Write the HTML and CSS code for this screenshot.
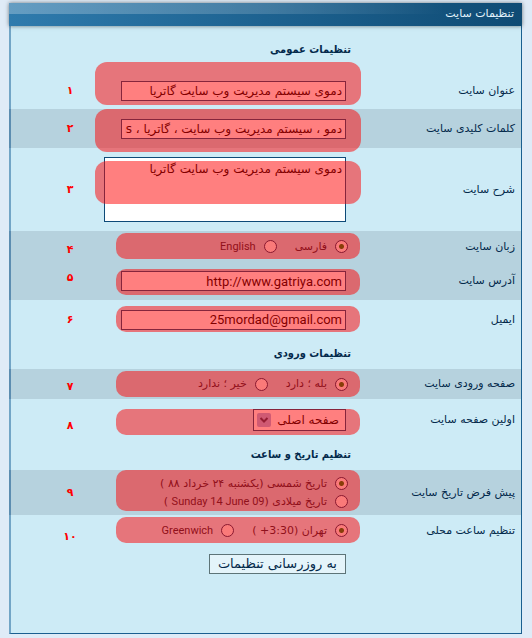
FILE: index.html
```html
<!DOCTYPE html>
<html lang="fa" dir="rtl">
<head>
<meta charset="utf-8">
<meta name="viewport" content="width=device-width, initial-scale=1">
<title>تنظیمات سایت</title>
<link rel="stylesheet" href="styles.css">
</head>
<body>
<form class="panel">
  <h1 class="panel-title">تنظیمات سایت</h1>

  <h2 class="section section-first">تنظیمات عمومی</h2>
  <div class="row row-title">
    <label class="name" for="title">عنوان سایت</label>
    <div class="field"><input class="text" id="title" type="text" value="دموی سیستم مدیریت وب سایت گاتریا"><span class="mark mark-wide"></span></div>
    <span class="num">۱</span>
  </div>
  <div class="row row-keywords shaded">
    <label class="name" for="keywords">کلمات کلیدی سایت</label>
    <div class="field"><input class="text" id="keywords" type="text" value="دمو ، سیستم مدیریت وب سایت ، گاتریا ، cms"><span class="mark mark-wide"></span></div>
    <span class="num">۲</span>
  </div>
  <div class="row row-about">
    <label class="name" for="about">شرح سایت</label>
    <div class="field"><textarea class="text area" id="about">دموی سیستم مدیریت وب سایت گاتریا</textarea><span class="mark mark-wide"></span></div>
    <span class="num">۳</span>
  </div>
  <div class="row row-language shaded">
    <span class="name" id="lang-name">زبان سایت</span>
    <div class="field choices" role="radiogroup" aria-labelledby="lang-name">
      <label class="choice"><input type="radio" name="lang" checked>فارسی</label>
      <label class="choice latin"><input type="radio" name="lang">English</label>
      <span class="mark"></span>
    </div>
    <span class="num num-low">۴</span>
  </div>
  <div class="row row-address shaded">
    <label class="name" for="address">آدرس سایت</label>
    <div class="field"><input class="text latin" id="address" type="text" dir="ltr" value="http://www.gatriya.com"><span class="mark"></span></div>
    <span class="num num-high">۵</span>
  </div>
  <div class="row row-email">
    <label class="name" for="email">ایمیل</label>
    <div class="field"><input class="text latin" id="email" type="email" dir="ltr" value="25mordad@gmail.com"><span class="mark"></span></div>
    <span class="num">۶</span>
  </div>

  <h2 class="section">تنظیمات ورودی</h2>
  <div class="row row-splash shaded">
    <span class="name" id="splash-name">صفحه ورودی سایت</span>
    <div class="field choices" role="radiogroup" aria-labelledby="splash-name">
      <label class="choice"><input type="radio" name="splash" checked>بله ؛ دارد</label>
      <label class="choice"><input type="radio" name="splash">خیر ؛ ندارد</label>
      <span class="mark"></span>
    </div>
    <span class="num num-low">۷</span>
  </div>
  <div class="row row-first-page">
    <label class="name" for="first-page">اولین صفحه سایت</label>
    <div class="field">
      <div class="picker">
        <select id="first-page"><option>صفحه اصلی</option></select>
        <svg class="arrow" viewBox="0 0 14 14" aria-hidden="true"><rect width="14" height="14" rx="2"/><path d="M3.500 5 7 8.500 10.500 5"/></svg>
      </div>
      <span class="mark"></span>
    </div>
    <span class="num num-lower">۸</span>
  </div>

  <h2 class="section">تنظیم تاریخ و ساعت</h2>
  <div class="row row-date shaded">
    <span class="name" id="date-name">پیش فرض تاریخ سایت</span>
    <div class="field choices stacked" role="radiogroup" aria-labelledby="date-name">
      <label class="choice"><input type="radio" name="date" checked>تاریخ شمسی (یکشنبه ۲۴ خرداد ۸۸ )</label>
      <label class="choice"><input type="radio" name="date"><span>تاریخ میلادی (<span class="latin">Sunday 14 June 09</span> )</span></label>
      <span class="mark mark-tall"></span>
    </div>
    <span class="num">۹</span>
  </div>
  <div class="row row-time">
    <span class="name" id="time-name">تنظیم ساعت محلی</span>
    <div class="field choices" role="radiogroup" aria-labelledby="time-name">
      <label class="choice"><input type="radio" name="time" checked>تهران (3:30+ )</label>
      <label class="choice latin"><input type="radio" name="time">Greenwich</label>
      <span class="mark"></span>
    </div>
    <span class="num num-lower">۱۰</span>
  </div>

  <div class="actions"><button class="submit" type="submit">به روزرسانی تنظیمات</button></div>
</form>
</body>
</html>
```

FILE: styles.css
```css
* { box-sizing: border-box; }

body {
  margin: 0;
  padding: 3px 10px 4px 9px;
  background: #dfebf7;
  color: #03294b;
  font-family: "DejaVu Sans", sans-serif;
  font-size: 11px;
  line-height: 16px;
}

.panel {
  background: #cdebf6;
  border-right: 1px solid #1b5f90;
  border-bottom: 1px solid #1b5f90;
  border-left: 2px solid #72a5c6;
  padding-bottom: 59px;
}

.panel-title {
  margin: 0 -1px 0 -2px;
  padding: 3px 8px 4px;
  background:
    linear-gradient(to right, rgba(255, 255, 255, .26), rgba(255, 255, 255, .16) 50%, rgba(255, 255, 255, 0) 85%) left top / 100% 11px no-repeat,
    linear-gradient(to right, #2f7bad, #1d6290 50%, #0f4b74);
  box-shadow: 0 0 4px rgba(0, 0, 0, .5);
  color: #e2f3fc;
  font-size: 11px;
  font-weight: normal;
}

.section {
  margin: 0;
  padding: 7px 170px 7px 0;
  font-family: "DejaVu Sans Condensed", "DejaVu Sans", sans-serif;
  font-size: 11px;
  font-weight: bold;
}

.section-first { padding: 16px 170px 14px 0; }

.row {
  display: grid;
  grid-template-columns: 160px minmax(0, 1fr) 84px;
  align-items: center;
}

.shaded {
  background: #b6d2de;
  margin-left: -2px;
  border-left: 2px solid #5c8db0;
}

.name { padding-right: 6px; }

.field {
  position: relative;
  align-self: stretch;
  display: flex;
  align-items: center;
  padding: 0 15px 0 26px;
}

.num {
  padding-left: 34px;
  color: #f00;
  font-weight: bold;
  text-align: center;
}

.num-high { padding-bottom: 6px; }
.num-low { padding-top: 6px; }
.num-lower { padding-top: 12px; }

.row-title { min-height: 37px; }
.row-keywords { min-height: 39px; }
.row-about { min-height: 83px; }
.row-language { min-height: 31px; }
.row-address { min-height: 38px; }
.row-email { min-height: 39px; }
.row-splash { min-height: 30px; }
.row-first-page { min-height: 41px; }
.row-date { min-height: 45px; }
.row-time { min-height: 31px; }

.text {
  width: 100%;
  height: 20px;
  margin: 0;
  padding: 0 3px;
  border: 1px solid #0d4a78;
  border-radius: 0;
  background: #fff;
  color: #000;
  font-family: inherit;
  font-size: 12px;
  line-height: 18px;
}

.latin { font-family: Roboto, "DejaVu Sans", sans-serif; }

.text.latin {
  font-size: 13px;
  text-align: right;
}

.area {
  display: block;
  height: 65px;
  padding-top: 2px;
  resize: none;
}

.row-about .field { padding-left: 9px; }

.choices {
  gap: 18px;
  padding-right: 13px;
}

.stacked {
  flex-direction: column;
  align-items: flex-start;
  justify-content: center;
  gap: 2px;
}

.choice {
  display: flex;
  align-items: center;
  gap: 8px;
  color: #1c2438;
  white-space: nowrap;
}

.choice input {
  appearance: none;
  width: 13px;
  height: 13px;
  margin: 0;
  border: 1px solid #14305f;
  border-radius: 50%;
  background: #f4f4f2;
}

.choice input:checked {
  background: radial-gradient(circle, #107a10 0 2px, #f4f4f2 3px);
}

.picker { position: relative; }

.picker select {
  display: block;
  appearance: none;
  width: 93px;
  height: 22px;
  margin: 0;
  padding: 0 6px 0 20px;
  border: 1px solid #0d4a78;
  border-radius: 0;
  background: #fff;
  color: #000;
  font-family: inherit;
  font-size: 12px;
}

.arrow {
  position: absolute;
  top: 4px;
  left: 4px;
  width: 14px;
  height: 14px;
  pointer-events: none;
}

.arrow rect { fill: #a0b4e6; }
.arrow path { fill: none; stroke: #2c3c66; stroke-width: 2; }

/* Translucent marker laid over each numbered setting */
.mark {
  position: absolute;
  z-index: 1;
  top: 2px;
  right: 1px;
  left: 21px;
  height: 26px;
  border-radius: 10px;
  background: rgba(255, 0, 0, .5);
  pointer-events: none;
}

.mark-wide {
  right: 0;
  left: 0;
  height: 43px;
  border-radius: 12px;
}

.mark-tall { top: 0; height: 41px; }
.row-title .mark { top: -10px; }
.row-keywords .mark { top: 0; }
.row-about .mark { top: 13px; }
.row-address .mark { top: 7px; }
.row-email .mark { top: 6px; }
.row-first-page .mark { top: 10px; }

.actions { padding: 8px 175px 0 0; }

.submit {
  height: 20px;
  margin: 0;
  padding: 0 8px;
  border: 1px solid #5d7478;
  border-radius: 0;
  background: #e4f4fa;
  color: #03294b;
  font-family: inherit;
  font-size: 13px;
  line-height: 18px;
}
```
